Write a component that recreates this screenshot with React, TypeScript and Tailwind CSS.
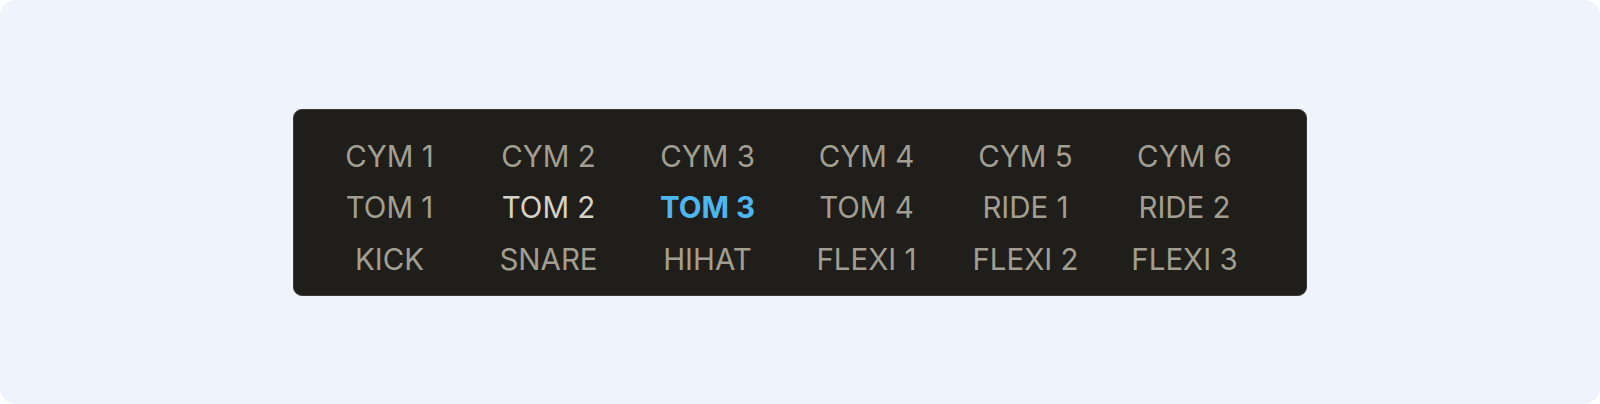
import React from "react";

const rows = [
  ["CYM 1", "CYM 2", "CYM 3", "CYM 4", "CYM 5", "CYM 6"],
  ["TOM 1", "TOM 2", "TOM 3", "TOM 4", "RIDE 1", "RIDE 2"],
  ["KICK", "SNARE", "HIHAT", "FLEXI 1", "FLEXI 2", "FLEXI 3"],
];

export default function App() {
  return (
    <div className="w-[1600px] h-[404px] bg-white">
      <div className="w-full h-full rounded-[16px] bg-[#eef3fc] flex items-center justify-center">
        <div
          className="w-[1014px] h-[187px] rounded-[9px] bg-[#201e1a] border border-[#3a3833] pt-[21px] pl-[16px]"
          style={{ fontFamily: "Inter, 'Noto Sans', sans-serif" }}
        >
          <div className="grid grid-cols-[repeat(6,159px)]">
            {rows.flat().map((label) => {
              const active = label === "TOM 3";
              const hover = label === "TOM 2";
              return (
                <div
                  key={label}
                  className={
                    "text-center text-[29.5px] leading-[51.5px] " +
                    (active
                      ? "font-bold text-[#4db6ee]"
                      : hover
                      ? "text-[#d8d2c6]"
                      : "text-[#a39e92]")
                  }
                >
                  {label}
                </div>
              );
            })}
          </div>
        </div>
      </div>
    </div>
  );
}
